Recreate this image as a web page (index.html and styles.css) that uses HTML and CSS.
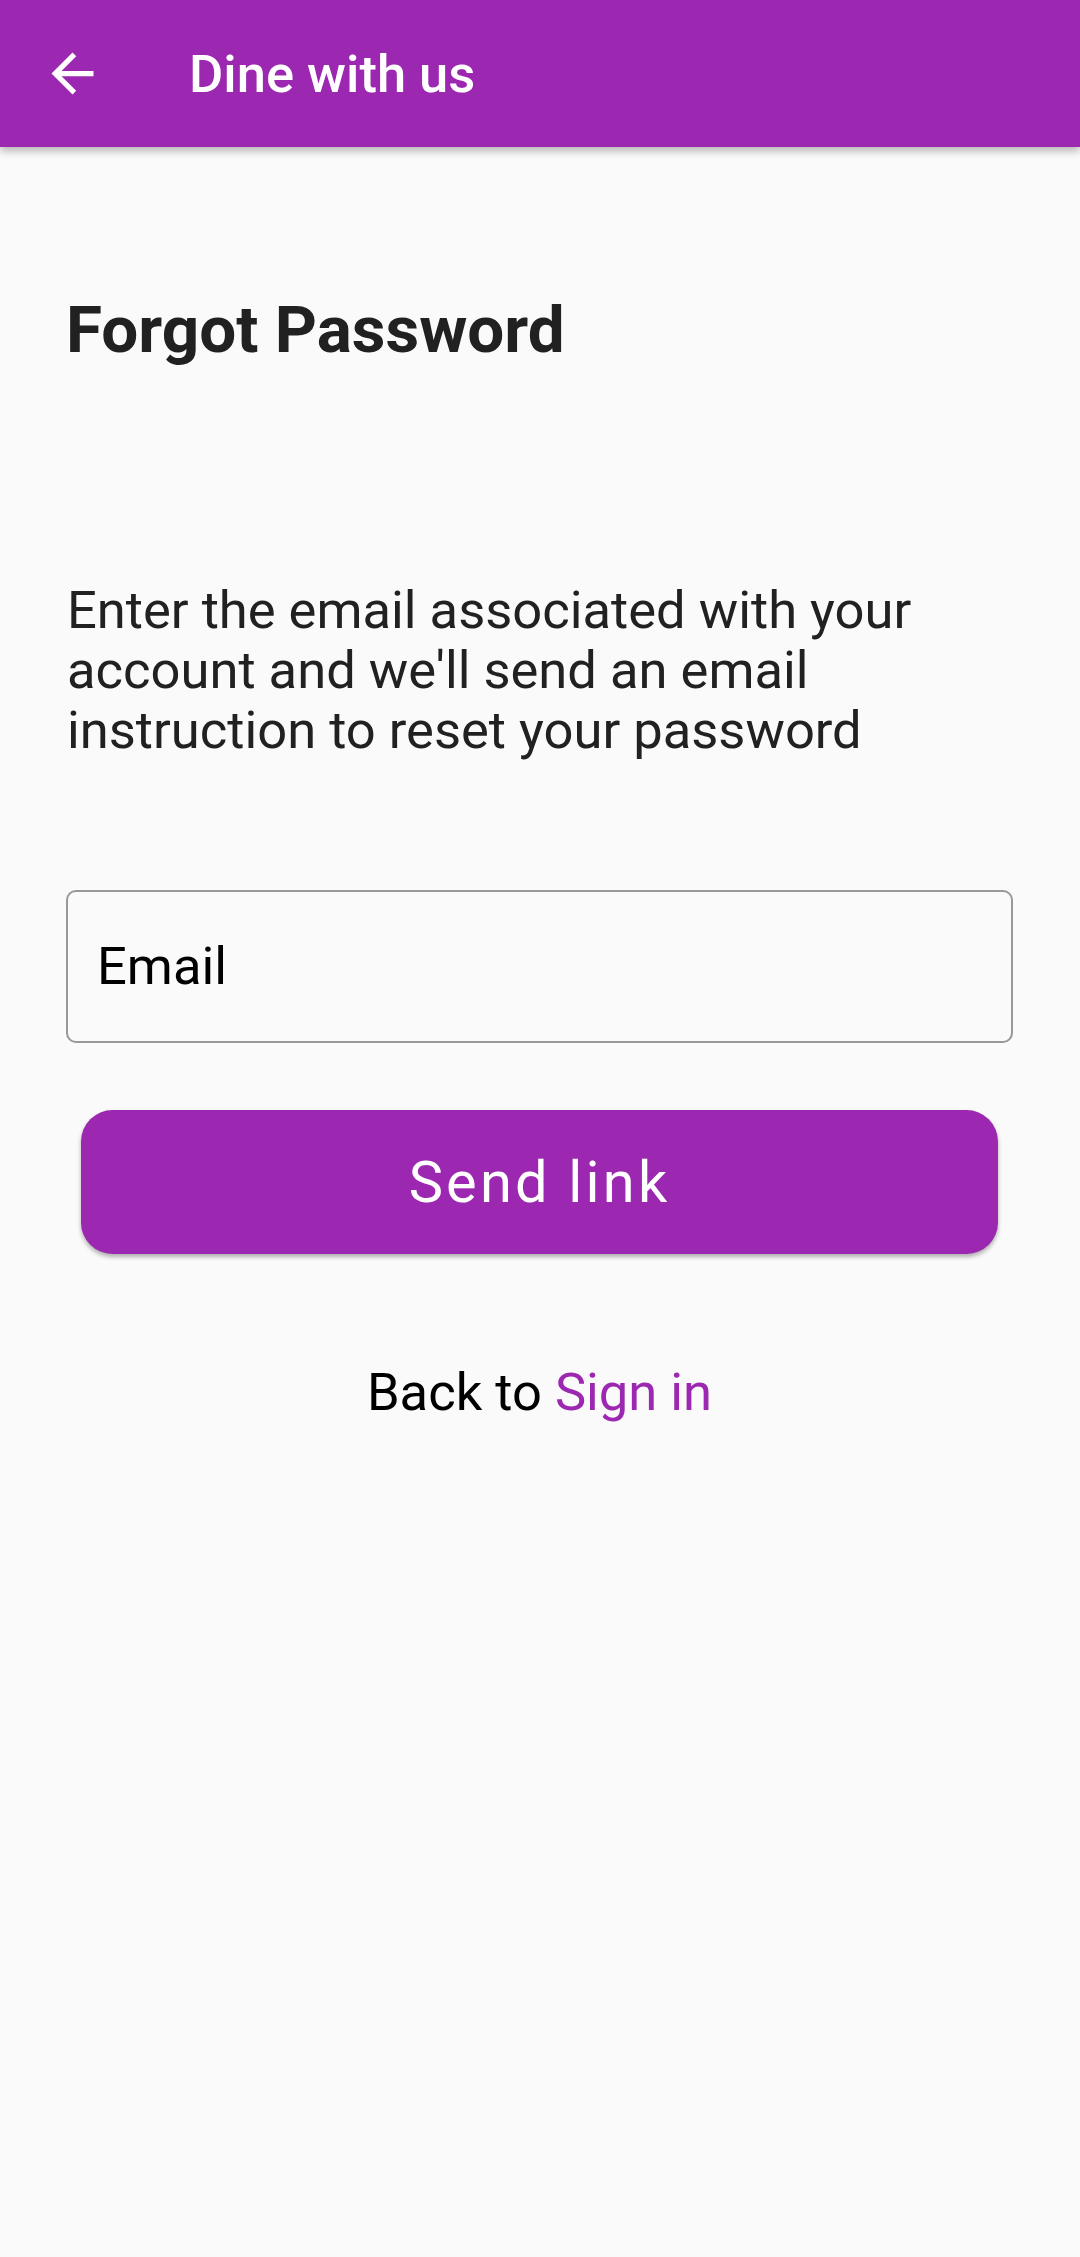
FILE: index.html
```html
<!DOCTYPE html>
<html lang="en">
<head>
<meta charset="utf-8">
<title>Dine with us</title>
<link rel="stylesheet" href="styles.css">
</head>
<body>
<header class="appbar">
  <button class="back" aria-label="Back">
    <svg viewBox="0 0 24 24" width="63" height="63"><path fill="#fff" d="M20 11H7.83l5.59-5.59L12 4l-8 8 8 8 1.41-1.41L7.83 13H20v-2z"/></svg>
  </button>
  <h1 class="appbar-title">Dine with us</h1>
</header>
<main class="content">
  <h2 class="heading">Forgot Password</h2>
  <p class="desc">Enter the email associated with your account and we'll send an email instruction to reset your password</p>
  <div class="field"><span class="field-label">Email</span></div>
  <button class="send">Send link</button>
  <p class="back-link">Back to <a class="signin" href="#">Sign in</a></p>
</main>
</body>
</html>
```
FILE: styles.css
```css
html, body {
  margin: 0;
  padding: 0;
}
body {
  background: #fafafa;
  font-family: Roboto, "Noto Sans", sans-serif;
  width: 1080px;
  min-height: 2257px;
}
.appbar {
  height: 147px;
  background: #9c27b0;
  display: flex;
  align-items: center;
  box-shadow: 0 4px 8px rgba(0,0,0,0.28);
  position: relative;
  z-index: 1;
}
.back {
  margin-left: 41px;
  width: 63px;
  height: 63px;
  padding: 0;
  border: 0;
  background: transparent;
  display: flex;
}
.appbar-title {
  margin: 2px 0 0 85px;
  color: #fff;
  font-size: 52.5px;
  font-weight: 500;
  line-height: 61.5px;
}
.content {
  padding: 0 67px 0 66px;
  display: flex;
  flex-direction: column;
}
.heading {
  margin: 144px 0 0 0;
  font-size: 65.6px;
  line-height: 77px;
  font-weight: 700;
  color: #212121;
}
.desc {
  margin: 212px 0 0 1px;
  font-size: 52.5px;
  line-height: 60px;
  color: #212121;
}
.field {
  margin-top: 130px;
  height: 153px;
  box-sizing: border-box;
  border: 2px solid #989898;
  border-radius: 10px;
  display: flex;
  align-items: center;
  padding-left: 29px;
}
.field-label {
  font-size: 52.5px;
  line-height: 61.5px;
  color: #000;
}
.send {
  margin: 67px 15px 0 15px;
  height: 144px;
  border: 0;
  border-radius: 31.5px;
  background: #9c27b0;
  color: #fff;
  font-family: Roboto, "Noto Sans", sans-serif;
  font-size: 57.75px;
  letter-spacing: 3.2px;
  box-shadow: 0 3px 4px rgba(0,0,0,0.3);
  padding: 0;
}
.back-link {
  margin: 108px 0 0 0;
  text-align: center;
  font-size: 52.5px;
  line-height: 61.5px;
  color: #000;
}
.signin {
  color: #9c27b0;
  text-decoration: none;
}
```
